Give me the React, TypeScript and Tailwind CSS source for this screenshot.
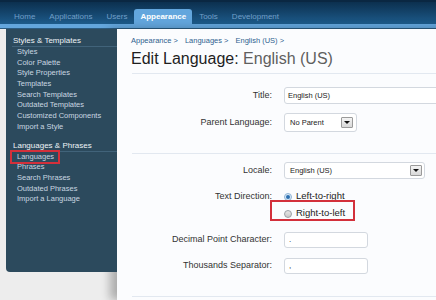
const tabs = ['Home', 'Applications', 'Users', 'Appearance', 'Tools', 'Development']

const groups = [
  {
    title: 'Styles & Templates',
    items: [
      'Styles',
      'Color Palette',
      'Style Properties',
      'Templates',
      'Search Templates',
      'Outdated Templates',
      'Customized Components',
      'Import a Style',
    ],
  },
  {
    title: 'Languages & Phrases',
    items: ['Languages', 'Phrases', 'Search Phrases', 'Outdated Phrases', 'Import a Language'],
  },
]

const DropButton = () => (
  <span className="flex h-[11px] w-[12px] items-center justify-center rounded-[1px] border border-[#9a9a9a] bg-gradient-to-b from-[#f4f4f4] to-[#d8d8d8]">
    <span className="h-0 w-0 border-x-[3px] border-t-[3px] border-x-transparent border-t-[#111]" />
  </span>
)

const Radio = ({ checked }: { checked?: boolean }) =>
  checked ? (
    <span className="flex h-[8px] w-[8px] items-center justify-center rounded-full border border-[#8fb4d6] bg-[#dbe9f6]">
      <span className="h-[4px] w-[4px] rounded-full bg-[#2b6fb0]" />
    </span>
  ) : (
    <span className="h-[8px] w-[8px] rounded-full border border-[#9aa0a6] bg-gradient-to-b from-[#e6e6e6] to-[#c9c9c9]" />
  )

const Row = ({ label, className, children }: { label: string; className: string; children: React.ReactNode }) => (
  <div className={`flex items-center ${className}`}>
    <div className="mr-[12px] w-[141px] shrink-0 text-right text-[9px] text-[#333]">{label}</div>
    {children}
  </div>
)

export default function App() {
  return (
    <div className="flex h-[300px] w-[436px] flex-col overflow-hidden bg-[#ededed] font-['Liberation_Sans',Arial,sans-serif]">
      {/* top tabs */}
      <div className="flex h-[24px] items-end border-t-2 border-[#0a2742] bg-gradient-to-b from-[#0c304f] to-[#1d5b8b] pl-[7px]">
        {tabs.map((t) =>
          t === 'Appearance' ? (
            <div
              key={t}
              className="flex h-[15px] items-center rounded-t-[3px] bg-[#63a6dd] px-[6px] text-[8px] font-bold text-white"
            >
              {t}
            </div>
          ) : (
            <div key={t} className="flex h-[15px] items-center px-[7px] text-[8px] text-[#719fc8]">
              {t}
            </div>
          ),
        )}
      </div>
      <div className="h-[4px] bg-[#63a6dd]" />
      <div className="h-px bg-[#2b5c82]" />

      <div className="flex flex-1">
        {/* sidebar */}
        <div className="relative z-10 ml-[6px] h-[243px] w-[111px] shrink-0 rounded-bl-[4px] bg-[#2c4a5d]">
          {groups.map((g, gi) => (
            <div key={g.title} className={gi === 0 ? 'pt-[7px]' : 'mt-[8px]'}>
              <div className="ml-[6px] h-[11px] border-b border-[#41637a] pl-[1px] text-[8px] leading-[10px] text-[#eef3f6]">
                {g.title}
              </div>
              {g.items.map((it) => (
                <div key={it} className="relative h-[10.7px] pl-[11px] text-[7.5px] leading-[10.7px] text-[#c9d7e1]">
                  {it}
                  {it === 'Languages' && (
                    <span className="absolute left-[4px] top-[-2px] h-[14px] w-[50px] border-2 border-[#d3303b]" />
                  )}
                </div>
              ))}
            </div>
          ))}
        </div>

        {/* main content */}
        <div className="flex-1 bg-[#fbfcfe] pl-[14px] shadow-[-7px_0_9px_rgba(0,0,0,0.28)]">
          <div className="flex gap-[7px] pt-[7px] text-[7.5px] leading-[10px] text-[#2f5f8f]">
            <span>Appearance &gt;</span>
            <span>Languages &gt;</span>
            <span>English (US) &gt;</span>
          </div>
          <div className="mt-[3px] text-[16px] leading-[20px] text-[#1e1e1e]">
            Edit Language: <span className="text-[#5f5f5f]">English (US)</span>
          </div>
          <div className="ml-px mt-[4px] h-px bg-[#e2e8f0]" />

          <Row label="Title:" className="mt-[13px]">
            <div className="flex h-[17px] w-[170px] shrink-0 items-center rounded-[3px] border border-[#d3d8df] bg-white pl-[3px] text-[7.5px] text-[#222]">
              English (US)
            </div>
          </Row>
          <Row label="Parent Language:" className="mt-[9px]">
            <div className="flex h-[19px] w-[73px] items-center justify-between rounded-[3px] border border-[#d3d8df] bg-white pl-[5px] pr-[3px] text-[7.5px] text-[#222]">
              No Parent
              <DropButton />
            </div>
          </Row>
          <div className="ml-px mt-[21px] h-px bg-[#e2e8f0]" />

          <Row label="Locale:" className="mt-[8px]">
            <div className="flex h-[17px] w-[141px] items-center justify-between rounded-[3px] border border-[#d3d8df] bg-white pl-[5px] pr-[2px] text-[7.5px] text-[#222]">
              English (US)
              <DropButton />
            </div>
          </Row>
          <Row label="Text Direction:" className="mt-[9px] h-[17px]">
            <div className="flex items-center gap-[4px] text-[9.5px] text-[#222]">
              <Radio checked />
              Left-to-right
            </div>
          </Row>
          <Row label="" className="h-[17px]">
            <div className="relative flex items-center gap-[4px] text-[9.5px] text-[#222]">
              <Radio />
              Right-to-left
              <span className="absolute left-[-14px] top-[-6px] h-[21px] w-[85px] border-2 border-[#d3303b]" />
            </div>
          </Row>
          <Row label="Decimal Point Character:" className="mt-[10px]">
            <div className="flex h-[16px] w-[84px] items-center rounded-[3px] border border-[#d3d8df] bg-white pl-[4px] text-[8px] text-[#222]">
              .
            </div>
          </Row>
          <Row label="Thousands Separator:" className="mt-[10px]">
            <div className="flex h-[16px] w-[84px] items-center rounded-[3px] border border-[#d3d8df] bg-white pl-[4px] text-[8px] text-[#222]">
              ,
            </div>
          </Row>
          <div className="ml-px mt-[22px] h-px bg-[#e2e8f0]" />
        </div>
      </div>
    </div>
  )
}
